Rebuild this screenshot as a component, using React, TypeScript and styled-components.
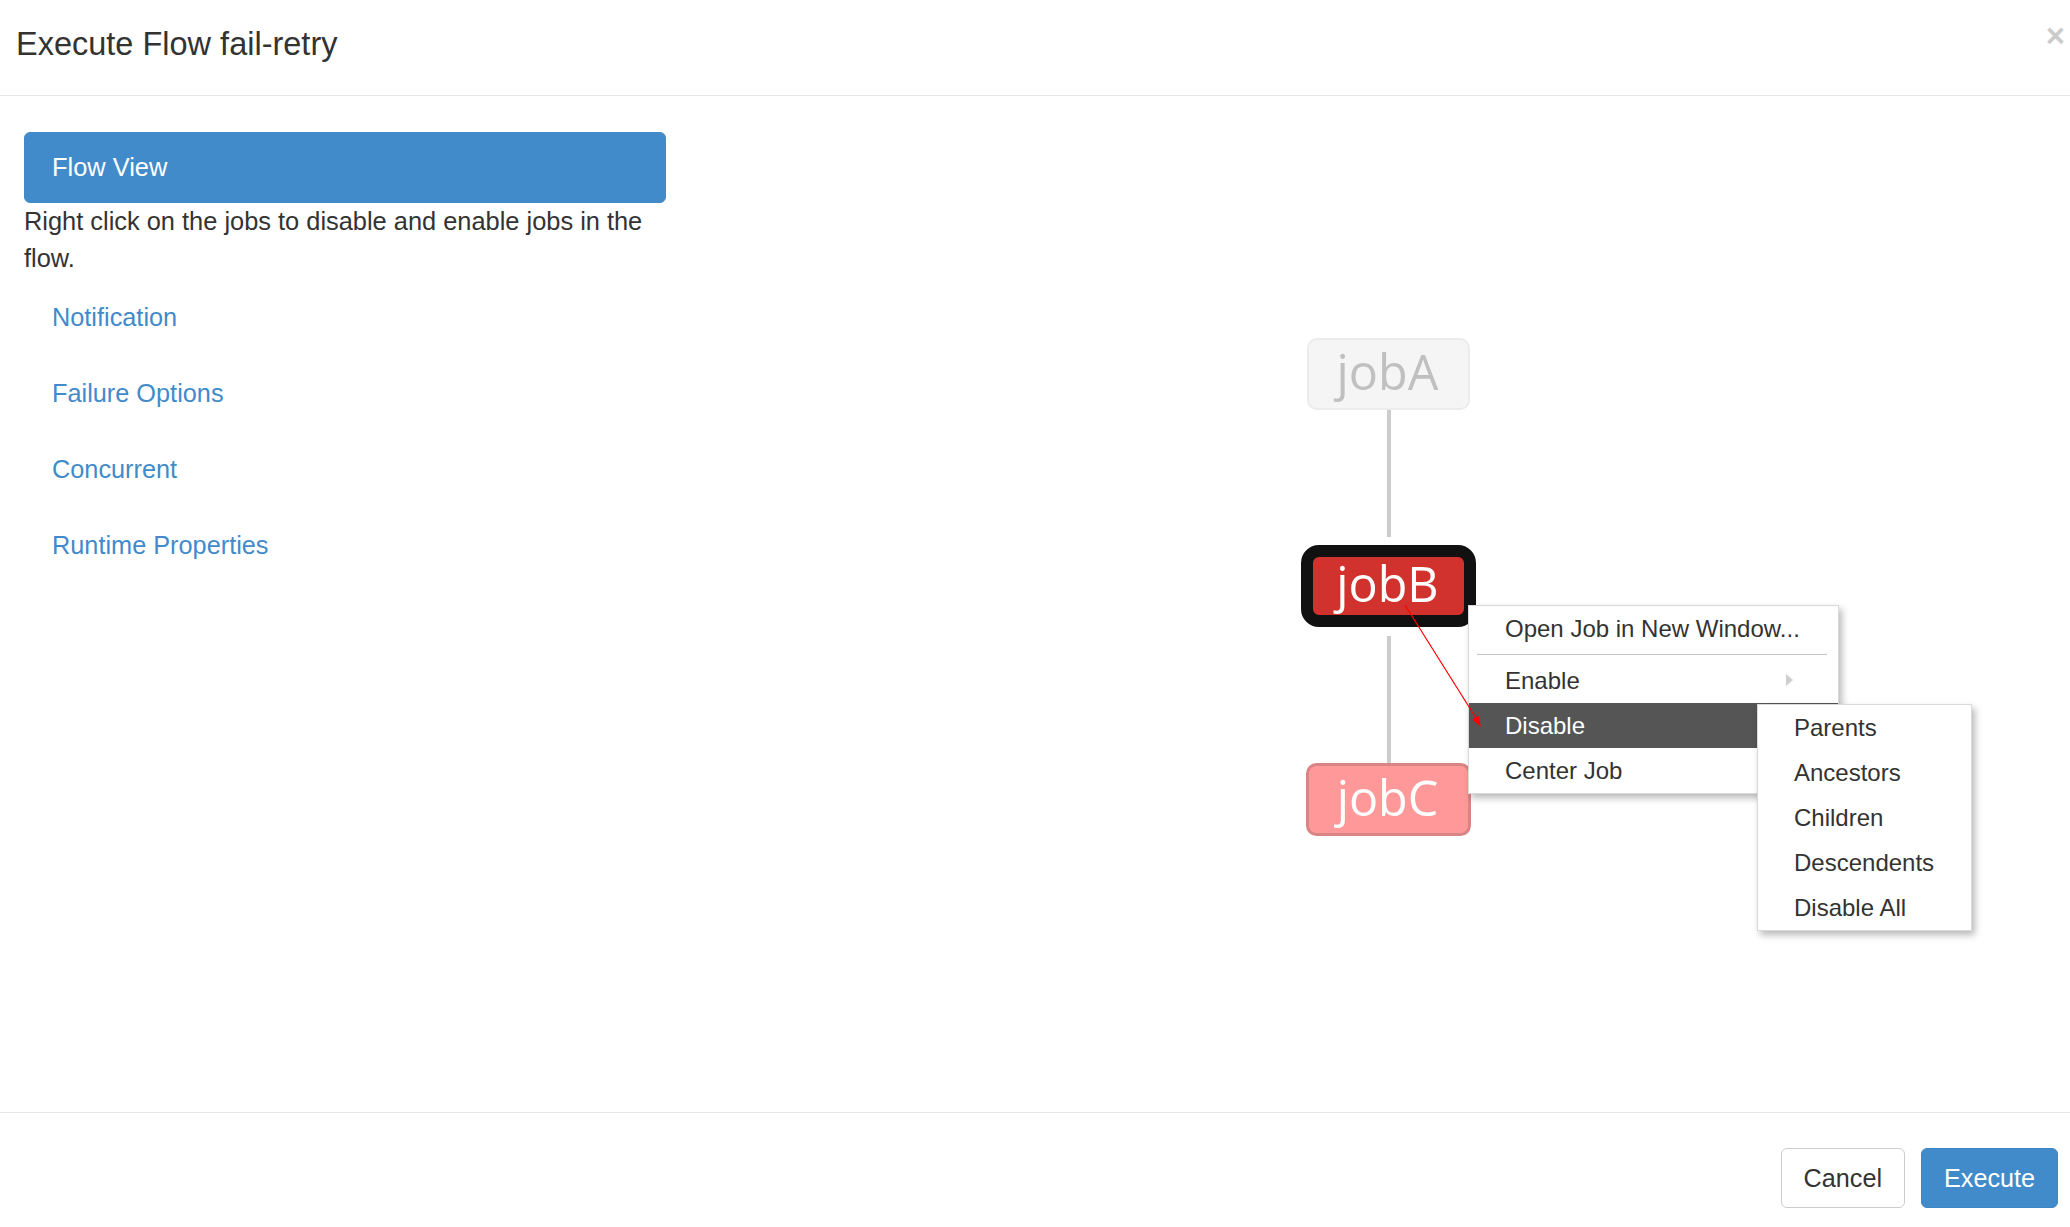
import React from "react";
import styled, { createGlobalStyle } from "styled-components";

const GlobalStyle = createGlobalStyle`
  html, body {
    margin: 0;
    padding: 0;
    background: #ffffff;
  }
  body {
    font-family: "Liberation Sans", Arial, Helvetica, sans-serif;
    color: #333333;
  }
  * { box-sizing: border-box; }
`;

const Modal = styled.div`
  width: 100%;
  height: 1227px;
  overflow: hidden;
  display: flex;
  flex-direction: column;
  background: #fff;
`;

const Header = styled.header`
  height: 96px;
  flex-shrink: 0;
  border-bottom: 1px solid #e5e5e5;
  padding: 26px 5px 0 16px;
  display: flex;
  align-items: flex-start;
`;

const Title = styled.h4`
  margin: 0;
  font-size: 32.5px;
  line-height: 36px;
  font-weight: normal;
  color: #333;
`;

const Close = styled.button`
  margin-left: auto;
  border: 0;
  background: transparent;
  padding: 0;
  font-family: "Liberation Sans", Arial, sans-serif;
  font-size: 33px;
  font-weight: bold;
  line-height: 20px;
  color: #000;
  opacity: 0.2;
  cursor: pointer;
`;

const Body = styled.main`
  position: relative;
  height: 1016px;
  flex-shrink: 0;
  display: flex;
`;

const Sidebar = styled.aside`
  width: 642px;
  margin-left: 24px;
  padding-top: 36px;
  flex-shrink: 0;
`;

const ListItem = styled.div<{ $active?: boolean }>`
  height: 71px;
  display: flex;
  align-items: center;
  padding: 0 27px;
  border: 1px solid ${(p) => (p.$active ? "#428bca" : "#ddd")};
  border-radius: 6px;
  background: ${(p) => (p.$active ? "#428bca" : "#fff")};
  color: ${(p) => (p.$active ? "#fff" : "#555")};
  font-size: 25.4px;
`;

const Hint = styled.p`
  margin: 0;
  font-size: 25.4px;
  line-height: 37px;
  color: #333;
`;

const Nav = styled.ul`
  list-style: none;
  margin: 0;
  padding: 0;
`;

const NavItem = styled.li`
  margin-top: 4px;
  height: 72px;
`;

const NavLink = styled.a`
  display: block;
  padding: 0 28px;
  line-height: 72px;
  font-size: 25.3px;
  color: #428bca;
  text-decoration: none;
`;

const GraphPane = styled.section`
  flex: 1;
  min-width: 0;
`;

const GraphSvg = styled.svg`
  display: block;
`;

const NodeLabel = styled.text`
  font-family: "Open Sans", "DejaVu Sans", sans-serif;
  font-size: 48.5px;
`;

const Menu = styled.ul<{ $left: number; $top: number; $width: number }>`
  position: absolute;
  left: ${(p) => p.$left}px;
  top: ${(p) => p.$top}px;
  width: ${(p) => p.$width}px;
  margin: 0;
  padding: 0;
  list-style: none;
  background: #fff;
  border: 1px solid rgba(0, 0, 0, 0.15);
  box-shadow: 3px 4px 7px rgba(0, 0, 0, 0.28);
  z-index: 2;
`;

const MenuItem = styled.li<{ $active?: boolean }>`
  position: relative;
  height: 45px;
  line-height: 45px;
  padding-left: 36px;
  font-size: 24px;
  white-space: nowrap;
  color: ${(p) => (p.$active ? "#fff" : "#333")};
  background: ${(p) => (p.$active ? "#555555" : "transparent")};
`;

const Divider = styled.li`
  height: 1px;
  margin: 3px 11px 3px 8px;
  background: #c6c6c6;
`;

const Caret = styled.span`
  position: absolute;
  right: 45px;
  top: 50%;
  margin-top: -7px;
  width: 0;
  height: 0;
  border-top: 6.5px solid transparent;
  border-bottom: 6.5px solid transparent;
  border-left: 7px solid #cfcfcf;
`;

const Annotation = styled.svg`
  position: absolute;
  left: 0;
  top: 0;
  pointer-events: none;
  z-index: 3;
`;

const Footer = styled.footer`
  flex: 1;
  border-top: 1px solid #e5e5e5;
  padding: 35px 12px 0;
  display: flex;
  justify-content: flex-end;
  align-items: flex-start;
  gap: 16px;
`;

const Button = styled.button<{ $primary?: boolean }>`
  height: 60px;
  padding: 0 22px;
  border-radius: 6px;
  font-family: "Liberation Sans", Arial, sans-serif;
  font-size: 25.2px;
  border: 1px solid ${(p) => (p.$primary ? "#3f86c4" : "#cccccc")};
  background: ${(p) => (p.$primary ? "#428bca" : "#ffffff")};
  color: ${(p) => (p.$primary ? "#ffffff" : "#333333")};
  cursor: pointer;
`;

const links = ["Notification", "Failure Options", "Concurrent", "Runtime Properties"];
const subItems = ["Parents", "Ancestors", "Children", "Descendents", "Disable All"];

export default function App() {
  return (
    <>
      <GlobalStyle />
      <Modal>
        <Header>
          <Title>Execute Flow fail-retry</Title>
          <Close aria-label="Close">×</Close>
        </Header>
        <Body>
          <Sidebar>
            <ListItem $active>Flow View</ListItem>
            <Hint>Right click on the jobs to disable and enable jobs in the flow.</Hint>
            <Nav>
              {links.map((l) => (
                <NavItem key={l}>
                  <NavLink href="#">{l}</NavLink>
                </NavItem>
              ))}
            </Nav>
          </Sidebar>
          <GraphPane>
            <GraphSvg width="1404" height="1016" viewBox="666 96 1404 1016">
              <line x1="1389" y1="409" x2="1389" y2="537" stroke="#cccccc" strokeWidth="4" />
              <line x1="1389" y1="636" x2="1389" y2="764" stroke="#cccccc" strokeWidth="4" />

              <rect x="1308" y="339" width="161" height="70" rx="9" fill="#f5f5f5" stroke="#ececec" strokeWidth="2" />
              <NodeLabel x="1387.5" y="390" textAnchor="middle" fill="#c0c0c0">jobA</NodeLabel>

              <rect x="1307" y="551" width="163" height="70" rx="12" fill="#d2322d" stroke="#111111" strokeWidth="12" />
              <NodeLabel x="1387.5" y="602" textAnchor="middle" fill="#ffffff">jobB</NodeLabel>

              <rect x="1307.5" y="764.5" width="162" height="70" rx="9" fill="#ff9999" stroke="#d98585" strokeWidth="3" />
              <NodeLabel x="1387.5" y="816" textAnchor="middle" fill="#ffffff">jobC</NodeLabel>
            </GraphSvg>
          </GraphPane>

          <Menu $left={1468} $top={509} $width={371}>
            <MenuItem>Open Job in New Window...</MenuItem>
            <Divider />
            <MenuItem>
              Enable
              <Caret />
            </MenuItem>
            <MenuItem $active>Disable</MenuItem>
            <MenuItem>Center Job</MenuItem>
          </Menu>

          <Menu $left={1757} $top={608} $width={215}>
            {subItems.map((s) => (
              <MenuItem key={s}>{s}</MenuItem>
            ))}
          </Menu>

          <Annotation width="2070" height="1016" viewBox="0 96 2070 1016">
            <line x1="1405" y1="605" x2="1476" y2="718" stroke="#ff0000" strokeWidth="1.2" />
            <polygon points="1481,727 1472.2,719.5 1478.4,715.6" fill="#ff0000" />
          </Annotation>
        </Body>
        <Footer>
          <Button>Cancel</Button>
          <Button $primary>Execute</Button>
        </Footer>
      </Modal>
    </>
  );
}
